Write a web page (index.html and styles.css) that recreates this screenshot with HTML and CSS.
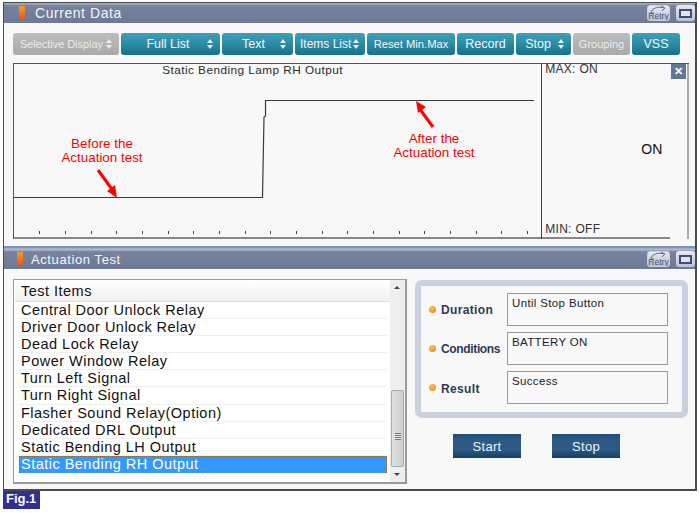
FILE: index.html
```html
<!DOCTYPE html>
<html lang="en">
<head>
<meta charset="utf-8">
<title>Current Data</title>
<link rel="stylesheet" href="styles.css">
</head>
<body>
<div class="frame">
  <header class="titlebar">
    <span class="lamp"></span>
    <span class="title">Current Data</span>
    <span class="winbtns">
      <span class="retry"><svg width="21" height="14" viewBox="0 0 21 14"><path d="M3 7 C3 2 11 0 16 2 M13 0 L17 2 L14 5 M3 7 H6" fill="none" stroke="#5d6b84" stroke-width="1"/><text x="10.5" y="12.5" class="retrytext">Retry</text></svg></span>
      <span class="maxbtn"><span class="maxicon"></span></span>
    </span>
  </header>
  <nav class="toolbar">
    <span class="tb off w1">Selective Display<i class="updown"></i></span>
    <span class="tb w2">Full List<i class="updown"></i></span>
    <span class="tb w3">Text<i class="updown"></i></span>
    <span class="tb w4">Items List<i class="updown"></i></span>
    <span class="tb w5">Reset Min.Max</span>
    <span class="tb w6">Record</span>
    <span class="tb w7">Stop<i class="updown"></i></span>
    <span class="tb off w8">Grouping</span>
    <span class="tb w9">VSS</span>
  </nav>
  <section class="chart">
    <div class="plot">
      <div class="plot-title">Static Bending Lamp RH Output</div>
      <svg class="trace" width="528" height="174" viewBox="0 0 528 174">
        <path d="M0 133.5 H248.5 L250 53 L251.5 52 V36.5 H520" fill="none" stroke="#3a3a3a" stroke-width="1.2"/>
        <path d="M25.5 167v3M51.5 167v3M77.5 167v3M102.5 167v3M128.5 167v3M154.5 167v3M179.5 167v3M205.5 167v3M231.5 167v3M256.5 167v3M282.5 167v3M308.5 167v3M333.5 167v3M359.5 167v3M385.5 167v3M410.5 167v3M436.5 167v3M462.5 167v3M487.5 167v3M513.5 167v3" stroke="#444" stroke-width="1"/>
        <path d="M84 106 L100 128" stroke="#f00" stroke-width="3"/>
        <path d="M103 134 L93 127 L101 121 Z" fill="#f00"/>
        <path d="M419 63 L405 44" stroke="#f00" stroke-width="3"/>
        <path d="M402 37 L412 43 L404 49 Z" fill="#f00"/>
      </svg>
      <div class="note note-before">Before the<br>Actuation test</div>
      <div class="note note-after">After the<br>Actuation test</div>
    </div>
    <aside class="side">
      <div class="minmax">MAX: ON</div>
      <div class="value">ON</div>
      <div class="minmax minval">MIN: OFF</div>
      <span class="close">✕</span>
    </aside>
  </section>
  <div class="divider"></div>
  <header class="titlebar second">
    <span class="lamp"></span>
    <span class="title">Actuation Test</span>
    <span class="winbtns">
      <span class="retry"><svg width="21" height="14" viewBox="0 0 21 14"><path d="M3 7 C3 2 11 0 16 2 M13 0 L17 2 L14 5 M3 7 H6" fill="none" stroke="#5d6b84" stroke-width="1"/><text x="10.5" y="12.5" class="retrytext">Retry</text></svg></span>
      <span class="maxbtn"><span class="maxicon"></span></span>
    </span>
  </header>
  <main class="lower">
    <section class="list">
      <div class="list-body">
        <div class="list-head">Test Items</div>
        <div class="row">Central Door Unlock Relay</div>
        <div class="row">Driver Door Unlock Relay</div>
        <div class="row">Dead Lock Relay</div>
        <div class="row">Power Window Relay</div>
        <div class="row">Turn Left Signal</div>
        <div class="row">Turn Right Signal</div>
        <div class="row">Flasher Sound Relay(Option)</div>
        <div class="row">Dedicated DRL Output</div>
        <div class="row">Static Bending LH Output</div>
        <div class="row selected">Static Bending RH Output</div>
      </div>
      <div class="scrollbar">
        <span class="arrow up"></span>
        <span class="track"><span class="thumb"><span class="grip"></span></span></span>
        <span class="arrow down"></span>
      </div>
    </section>
    <section class="control">
      <div class="info">
        <div class="field"><span class="bullet"></span><span class="flabel">Duration</span><span class="fbox">Until Stop Button</span></div>
        <div class="field"><span class="bullet"></span><span class="flabel tight">Conditions</span><span class="fbox">BATTERY ON</span></div>
        <div class="field"><span class="bullet"></span><span class="flabel low">Result</span><span class="fbox">Success</span></div>
      </div>
      <div class="actions">
        <span class="act">Start</span>
        <span class="act">Stop</span>
      </div>
    </section>
  </main>
</div>
<div class="fig">Fig.1</div>
</body>
</html>
```
FILE: styles.css
```css
* { box-sizing: border-box; }
html, body { margin: 0; padding: 0; background: #fff; }
body { width: 700px; height: 513px; padding: 2px 0 0 3px; font-family: "Liberation Sans", Arial, sans-serif; overflow: hidden; }
.frame { width: 694px; height: 489px; border: 1px solid #4a4a4a; border-width: 1px 2px 2px 1px; background: #f8f8f8; display: flex; flex-direction: column; }
.titlebar { height: 20px; flex: none; display: flex; align-items: center; background: linear-gradient(#aab4c6 0, #76829e 3px, #6c7a97 100%); color: #f4f6f8; padding-left: 15px; }
.lamp { width: 6px; height: 14px; background: linear-gradient(#f49a2c, #e8541c); margin-right: 10px; }
.title { font-size: 14px; letter-spacing: .55px; font-weight: normal; }
.winbtns { margin-left: auto; display: flex; gap: 6px; padding-right: 0; align-items: center; }
.retry { width: 23px; height: 16px; border: 1px solid #c8d0dc; border-radius: 3px; background: linear-gradient(#e8ecf2, #b4bece); display: flex; }
.retrytext { font: 8.5px "Liberation Sans", sans-serif; fill: #46546c; text-anchor: middle; }
.maxbtn { width: 19px; height: 16px; border-radius: 3px; background: linear-gradient(#e6eaf2, #b7c2d6); display: flex; align-items: center; justify-content: center; }
.maxicon { width: 13px; height: 9px; border: 2px solid #3d4d70; background: #dfe5ef; }
.toolbar { display: flex; gap: 2px; padding: 10px 0 0 9px; height: 40px; flex: none; }
.tb { height: 22px; border-radius: 3px; background: linear-gradient(#3f9fb7 0, #2e8ea8 45%, #16708c 100%); color: #f2f7f9; font-size: 12.5px; display: flex; align-items: center; justify-content: center; position: relative; white-space: nowrap; font-weight: normal; }
.off { background: linear-gradient(#bdbdbd, #a9a9a9); color: #ececec; }
.updown { position: absolute; right: 6px; top: 6px; width: 7px; height: 10px; }
.updown::before, .updown::after { content: ""; position: absolute; left: 0; border-left: 3.5px solid transparent; border-right: 3.5px solid transparent; }
.updown::before { top: 0; border-bottom: 4px solid #e4eef1; }
.updown::after { bottom: 0; border-top: 4px solid #e4eef1; }
.w1 { width: 106px; justify-content: flex-start; padding-left: 7px; font-size: 10.9px; }
.w2 { width: 99px; padding-right: 5px; }
.w3 { width: 71px; padding-right: 8px; }
.w4 { width: 70px; justify-content: flex-start; padding-left: 5px; font-size: 12px; }
.w4 .updown { right: 5px; }
.w5 { width: 88px; font-size: 11.2px; }
.w6 { width: 57px; }
.w7 { width: 55px; padding-right: 11px; }
.w8 { width: 57px; font-size: 11px; }
.w9 { width: 48px; }
.chart { margin-left: 9px; width: 676px; height: 176px; flex: none; display: flex; border: 1px solid #555; border-width: 1px 0 0 1px; position: relative; background: #f8f8f8; }
.plot { width: 528px; height: 175px; position: relative; border-bottom: 2px solid #888; }
.plot-title { font-size: 11.8px; letter-spacing: .45px; color: #2a2a2a; text-align: center; padding-top: 0; line-height: 12px; margin-right: 50px; }
.trace { position: absolute; left: 0; top: 0; }
.note { position: absolute; color: #f00; font-size: 13.4px; line-height: 14px; text-align: center; width: 110px; }
.note-before { left: 33px; top: 73px; }
.note-after { left: 365px; top: 68px; }
.side { width: 148px; height: 175px; border-left: 1px solid #444; display: flex; flex-direction: column; position: relative; border-right: 2px solid #aaa; }
.minmax { font-size: 12px; color: #333; letter-spacing: .3px; padding-left: 3px; line-height: 13px; }
.side > .minmax:first-child { margin-top: -1px; }
.value { flex: 1; font-size: 14px; color: #111; padding-left: 99px; padding-top: 65px; letter-spacing: .2px; }
.minval { padding-bottom: 0; line-height: 16px; border-bottom: 2px solid #888; margin-right: 17px; }
.close { position: absolute; right: 1px; top: 0; width: 15px; height: 15px; background: #5e7896; color: #fff; font-size: 11px; line-height: 15px; text-align: center; font-weight: bold; }
.divider { height: 7px; flex: none; }
.second { height: 23px; padding-top: 3px; background: linear-gradient(#7f93b2 0, #7f93b2 2px, #bcc7d6 3px, #76829e 6px, #6c7a97 100%); padding-left: 13px; }
.second .lamp { margin-right: 8px; }
.second .title { font-size: 13px; letter-spacing: .6px; }
.lower { flex: 1; display: flex; padding: 10px 0 0 9px; gap: 8px; min-height: 0; }
.list { width: 394px; height: 205px; border: 1px solid #9a9a9a; background: #fff; display: flex; border-width: 1px 2px 2px 1px; }
.list-body { flex: 1; min-width: 0; padding-top: 1px; }
.list-head { height: 21px; padding: 3px 0 0 6px; font-size: 14.5px; line-height: 15px; letter-spacing: .48px; color: #111; background: linear-gradient(#fff, #f0f0f0); border-bottom: 1px solid #ddd; margin-left: 1px; }
.row { height: 17.1px; margin-left: 5px; margin-right: 3px; padding-left: 2px; font-size: 14.5px; line-height: 17px; letter-spacing: .48px; color: #111; border-bottom: 1px solid #f0f0f0; white-space: nowrap; }
.row.selected { background: #3399ff; color: #fff; border: 1px dotted #8a6a3a; border-width: 1px 1px 0; height: 17px; padding-left: 1px; line-height: 15px; }
.scrollbar { width: 15px; background: #efefef; display: flex; flex-direction: column; align-items: stretch; }
.arrow { height: 15px; flex: none; position: relative; }
.arrow::after { content: ""; position: absolute; left: 4px; top: 6px; border-left: 3px solid transparent; border-right: 3px solid transparent; }
.arrow.up::after { border-bottom: 3px solid #444; }
.arrow.down::after { border-top: 3px solid #444; }
.track { flex: 1; display: flex; flex-direction: column; justify-content: flex-end; }
.thumb { height: 77px; margin: 0 1px; border: 1px solid #aaa; border-radius: 2px; background: linear-gradient(to right, #e2e2e2, #cdcdcd); display: flex; align-items: center; justify-content: center; padding-top: 16px; }
.grip { width: 6px; height: 7px; background: repeating-linear-gradient(#777 0 1px, #e4e4e4 1px 2px); }
.control { flex: none; width: 273px; display: flex; flex-direction: column; }
.info { height: 138px; border: 6px solid #c8d1dd; border-radius: 7px; background: #f8f8f8; padding: 7px 14px 0 8px; display: flex; flex-direction: column; gap: 6px; margin-top: 1px; }
.field { display: flex; align-items: center; height: 33px; }
.bullet { width: 7px; height: 7px; border-radius: 50%; background: radial-gradient(circle at 40% 35%, #ffc05a, #ee7a14); margin-right: 5px; flex: none; }
.flabel { width: 66px; flex: none; font-size: 12px; font-weight: bold; color: #2d3a52; letter-spacing: .35px; }
.flabel.tight { letter-spacing: -.35px; }
.flabel.low { padding-top: 3px; }
.fbox { flex: none; width: 161px; height: 33px; border: 1px solid #9a9a9a; font-size: 11.5px; letter-spacing: .35px; color: #222; padding: 3px 0 0 4px; line-height: 13px; }
.actions { display: flex; gap: 31px; padding: 16px 0 0 38px; }
.act { width: 68px; height: 24px; background: linear-gradient(#1f4d78 0, #2d5a85 25%, #2d5a85 65%, #143f66 100%); color: #eef3f7; font-size: 13px; letter-spacing: .3px; display: flex; align-items: center; justify-content: center; }
.fig { width: 37px; height: 18px; background: #2f3192; color: #fff; font-size: 13px; font-weight: bold; padding-left: 3px; line-height: 16px; }
```
